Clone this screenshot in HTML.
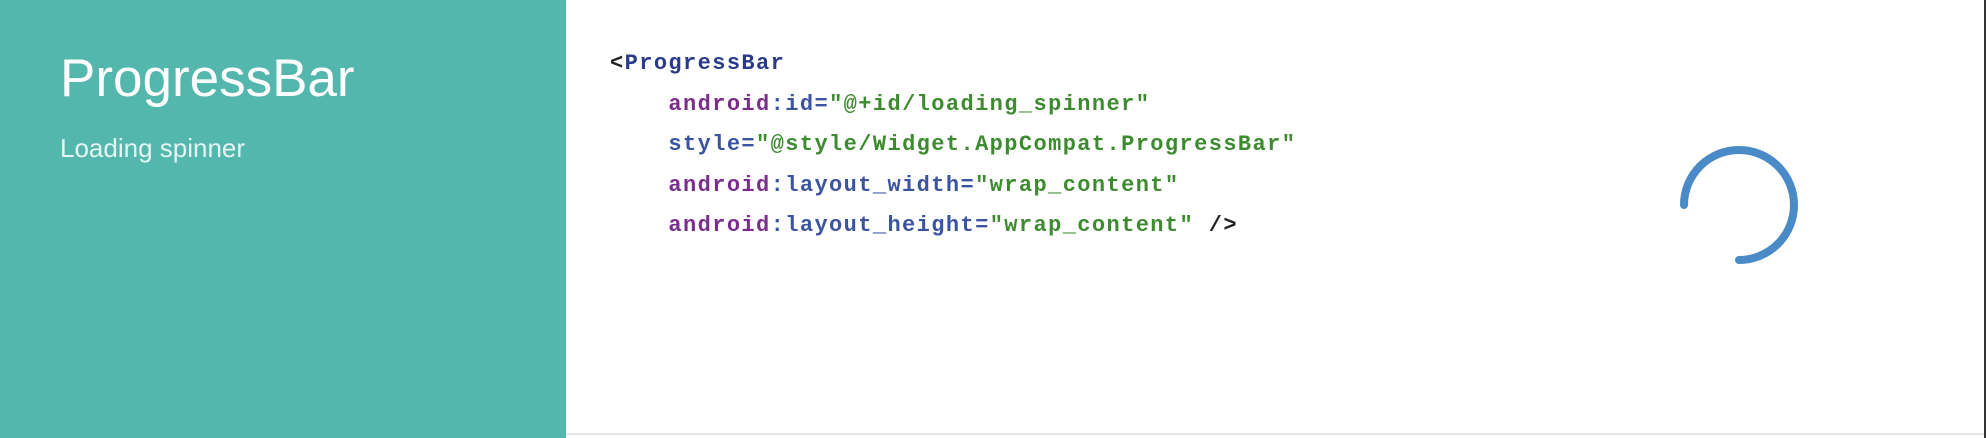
<!DOCTYPE html>
<html><head><style>
html,body{margin:0;padding:0;width:1986px;height:438px;overflow:hidden;background:#fff;position:relative}
.left{position:absolute;left:0;top:0;width:566px;height:438px;background:#53b7ad}
.t{position:absolute;left:60px;top:52px;font:53px/1 "Liberation Sans",sans-serif;color:#fff}
.s{position:absolute;left:60px;top:135px;font:26px/1 "Liberation Sans",sans-serif;color:#e6f5f3}
.code{position:absolute;left:610px;top:44px;font:bold 22px/40.5px "Liberation Mono",monospace;letter-spacing:1.4px;white-space:pre;color:#222}
.tg{color:#2a3a8a}.a{color:#7b2d8b}.b{color:#3a54a0}.g{color:#3d8b2f}
.rb{position:absolute;right:0;top:0;width:2px;height:438px;background:#333}
.bb{position:absolute;left:566px;right:2px;bottom:3px;height:2px;background:#e6e6e6}
</style></head><body>
<div class="left"><div class="t">ProgressBar</div><div class="s">Loading spinner</div></div>
<div class="code">&lt;<span class="tg">ProgressBar</span>
    <span class="a">android</span><span class="b">:id=</span><span class="g">"@+id/loading_spinner"</span>
    <span class="b">style=</span><span class="g">"@style/Widget.AppCompat.ProgressBar"</span>
    <span class="a">android</span><span class="b">:layout_width=</span><span class="g">"wrap_content"</span>
    <span class="a">android</span><span class="b">:layout_height=</span><span class="g">"wrap_content"</span> /&gt;</div>
<svg style="position:absolute;left:0;top:0" width="1986" height="438">
<path d="M1684 205 A55 55 0 1 1 1739 260" fill="none" stroke="#4a8ac6" stroke-width="8" stroke-linecap="round"/>
</svg>
<div class="bb"></div><div class="rb"></div>
</body></html>
